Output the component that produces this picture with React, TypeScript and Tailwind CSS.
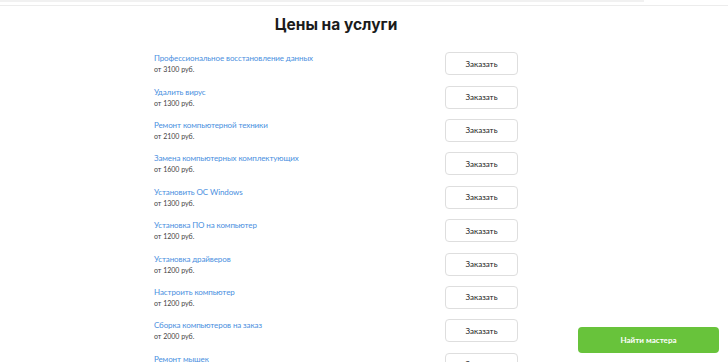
const services = [
  { name: "Профессиональное восстановление данных", price: "от 3100 руб." },
  { name: "Удалить вирус", price: "от 1300 руб." },
  { name: "Ремонт компьютерной техники", price: "от 2100 руб." },
  { name: "Замена компьютерных комплектующих", price: "от 1600 руб." },
  { name: "Установить ОС Windows", price: "от 1300 руб." },
  { name: "Установка ПО на компьютер", price: "от 1200 руб." },
  { name: "Установка драйверов", price: "от 1200 руб." },
  { name: "Настроить компьютер", price: "от 1200 руб." },
  { name: "Сборка компьютеров на заказ", price: "от 2000 руб." },
  { name: "Ремонт мышек", price: "от 900 руб." },
]

export default function App() {
  return (
    <div className="min-h-screen bg-white font-['Lato',sans-serif]">
      {/* top strip */}
      <div className="h-[2px] w-[644px] bg-[#f1f1f1]" />
      <div className="mt-[3px] h-px w-full bg-[#ececec]" />

      <main className="ml-[154px] w-[364px]">
        <h1 className="mt-[7px] text-center font-['Inter',sans-serif] text-[15.5px] font-bold leading-[24px] text-[#1b1b1b]">
          Цены на услуги
        </h1>

        <div className="mt-[10px]">
          {services.map((s) => (
            <div key={s.name} className="flex h-[33.4px] items-center justify-between">
              <div className="flex flex-col">
                <a href="#" className="text-[8px] leading-[12px] text-[#4a8fe0] tracking-[-0.1px]">
                  {s.name}
                </a>
                <span className="text-[7px] leading-[11px] text-[#444]">{s.price}</span>
              </div>
              <button className="h-[23px] w-[73px] rounded-[4px] border border-[#dedede] bg-white text-[8px] text-[#222]">
                Заказать
              </button>
            </div>
          ))}
        </div>
      </main>

      <button className="fixed bottom-[9px] right-[9px] h-[26px] w-[141px] rounded-[4px] bg-[#68c33b] text-[8px] font-bold text-white">
        Найти мастера
      </button>
    </div>
  )
}
